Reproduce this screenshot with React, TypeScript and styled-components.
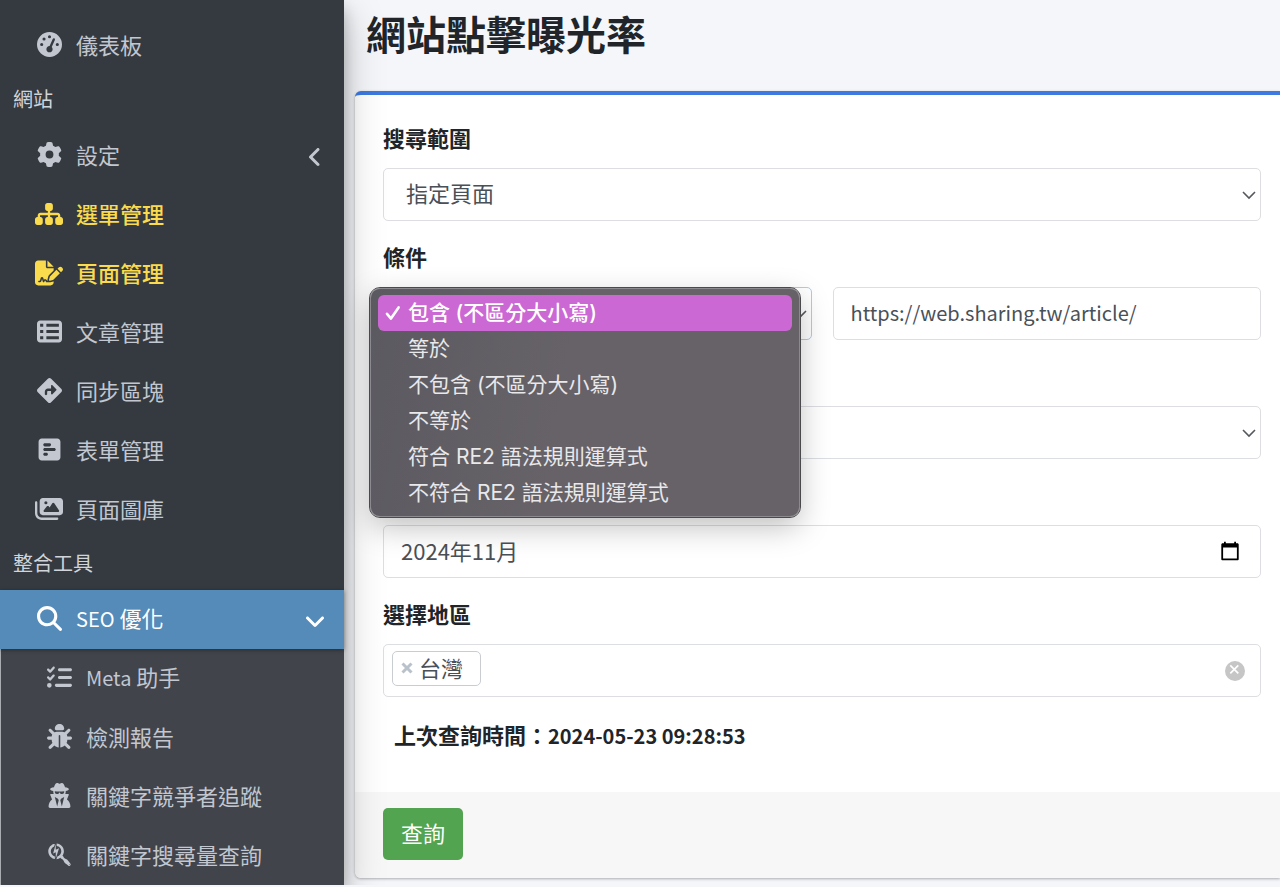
import React from 'react';
import styled, { createGlobalStyle, css } from 'styled-components';
import {
  FaAngleDown,
  FaAngleLeft,
  FaBug,
  FaDiamondTurnRight,
  FaFileSignature,
  FaGaugeHigh,
  FaGear,
  FaImages,
  FaListCheck,
  FaMagnifyingGlass,
  FaSearchengin,
  FaSitemap,
  FaSquarePollHorizontal,
  FaTableList,
  FaUserSecret,
} from 'react-icons/fa6';

const GlobalStyle = createGlobalStyle`
  *, *::before, *::after { box-sizing: border-box; }
  body {
    margin: 0;
    background: #f4f6f9;
    color: #212529;
    font-family: "Noto Sans CJK TC", sans-serif;
    font-size: 22px;
    line-height: 32px;
    overflow-x: hidden;
  }
  button, input, select { font: inherit; color: inherit; }
`;

const Page = styled.div`
  display: flex;
  align-items: flex-start;
`;

/* Latin letters and digits run one step smaller than the Chinese text beside them. */
const Latin = styled.span`
  font-size: 20px;
`;

/* ---------- sidebar ---------- */

const Sidebar = styled.nav`
  position: relative;
  z-index: 1;
  flex: 0 0 344px;
  padding-top: 16px;
  background: #343a40;
  box-shadow: 0 14px 38px rgba(0, 0, 0, 0.25), 0 10px 14px rgba(0, 0, 0, 0.22);
`;

const NavList = styled.ul`
  margin: 0;
  padding: 0;
  list-style: none;
`;

const SubList = styled(NavList)`
  background: #41444b;
  border-left: 1px solid #a9acb0;
`;

const NavHeader = styled.h2`
  display: flex;
  align-items: center;
  height: 51px;
  margin: 0;
  padding: 0 13px 4px;
  color: #d0d4db;
  font-size: 20px;
  font-weight: 400;
`;

type Tone = 'normal' | 'marked' | 'active';

const tones = {
  normal: css`
    color: #c2c7d0;
  `,
  marked: css`
    color: #f9db4d;
    font-weight: 500;
  `,
  active: css`
    color: #fff;
    background: #548bb9;
    box-shadow: 0 1px 4px rgba(0, 0, 0, 0.4);
  `,
};

const NavLink = styled.a<{ $tone: Tone; $nested?: boolean }>`
  position: relative;
  display: flex;
  align-items: center;
  height: 59px;
  padding: 0 19px 2px ${(p) => (p.$nested ? 43 : 34)}px;
  text-decoration: none;
  ${(p) => tones[p.$tone]}
`;

const NavIcon = styled.span<{ $wide?: boolean }>`
  display: flex;
  justify-content: center;
  width: 30px;
  margin-right: 12px;

  svg {
    width: ${(p) => (p.$wide ? 28 : 25)}px;
    height: ${(p) => (p.$wide ? 28 : 25)}px;
  }
`;

const NavText = styled.span`
  padding-bottom: 1px;
`;

const NavArrow = styled.span`
  display: flex;
  justify-content: center;
  width: 20px;
  margin-left: auto;
  padding-top: 4px;

  svg {
    width: 24px;
    height: 24px;
    flex: none;
  }
`;

/* ---------- content ---------- */

const Main = styled.main`
  flex: 1;
  min-width: 0;
  padding-left: 11px;
`;

const Title = styled.h1`
  margin: 0;
  padding: 4px 11px 29px;
  font-size: 40px;
  line-height: 58px;
  font-weight: 700;
`;

const Card = styled.form`
  border-top: 4px solid #3d79e0;
  border-radius: 6px 0 0 6px;
  background: #fff;
  box-shadow: 0 1px 3px rgba(0, 0, 0, 0.3);
`;

const CardBody = styled.div`
  display: flex;
  flex-direction: column;
  gap: 19px;
  padding: 26px 19px 40px 28px;
`;

const CardFooter = styled.div`
  padding: 16px 28px 18px;
  border-radius: 0 0 0 6px;
  background: #f7f7f7;
`;

/* A bare field keeps the room of the caption that the open menu covers. */
const Field = styled.div<{ $bare?: boolean }>`
  display: flex;
  flex-direction: column;
  gap: 15px;
  padding-top: ${(p) => (p.$bare ? 47 : 0)}px;
`;

const Label = styled.label`
  font-weight: 700;
`;

const Pair = styled.div`
  display: grid;
  grid-template-columns: 1fr 1fr;
  gap: 21px;
`;

const Stack = styled.div`
  position: relative;
  display: grid;
  align-items: center;

  > * {
    grid-area: 1 / 1;
  }

  > svg {
    justify-self: end;
    margin-right: 5px;
    pointer-events: none;
  }
`;

const controlBox = css`
  width: 100%;
  min-width: 0;
  height: 53px;
  border: 1px solid #dcdee1;
  border-radius: 5px;
  background: #fff;
  color: #495057;
`;

const TextInput = styled.input`
  ${controlBox}
  padding: 0 17px 4px;
  outline: none;
`;

const UrlInput = styled(TextInput)`
  padding-bottom: 2px;
  font-size: 20px;
`;

const Select = styled.select<{ $focused?: boolean }>`
  ${controlBox}
  padding: 0 40px 5px 22px;
  border-color: ${(p) => (p.$focused ? '#a6cdf8' : '#dcdee1')};
  appearance: none;
  outline: none;
`;

const CalendarButton = styled.button`
  display: flex;
  justify-self: end;
  margin: 0 22px 2px 0;
  padding: 0;
  border: 0;
  background: none;
`;

const Popup = styled.ul`
  position: absolute;
  z-index: 2;
  top: 1px;
  left: -13px;
  width: calc(100% + 1px);
  margin: 0;
  padding: 6px 7px 5px;
  border: 1px solid #8c8a8f;
  border-radius: 10px;
  outline: 1px solid #4a4a4d;
  background: linear-gradient(100deg, #5b5a60 0%, #666268 45%, #666268 100%);
  box-shadow: 0 10px 30px rgba(0, 0, 0, 0.25);
  list-style: none;
`;

const PopupOption = styled.li<{ $selected?: boolean }>`
  display: flex;
  align-items: center;
  height: 36px;
  border-radius: 6px;
  color: ${(p) => (p.$selected ? '#fff' : '#e9e8ea')};
  background: ${(p) => (p.$selected ? '#cb68d4' : 'transparent')};
  font-family: Inter, "Noto Sans CJK TC", sans-serif;
  font-size: 21px;
  font-weight: ${(p) => (p.$selected ? 500 : 400)};
`;

const CheckSlot = styled.span`
  display: flex;
  justify-content: center;
  width: 30px;
`;

const TagBox = styled.div`
  ${controlBox}
  display: flex;
  align-items: center;
  padding: 0 15px 0 8px;
`;

const Tag = styled.span`
  display: flex;
  align-items: center;
  gap: 6px;
  height: 35px;
  margin-bottom: 4px;
  padding: 0 17px 4px 8px;
  border: 1px solid #c9cdd2;
  border-radius: 5px;
`;

const IconButton = styled.button`
  display: flex;
  padding: 0;
  border: 0;
  background: none;
`;

const RemoveButton = styled(IconButton)`
  padding-top: 3px;
`;

const TagInput = styled.input`
  flex: 1;
  min-width: 0;
  border: 0;
  outline: none;
  background: none;
`;

const LastQuery = styled.p`
  margin: 0;
  padding: 2px 0 0 11px;
  font-weight: 700;
`;

const SubmitButton = styled.button`
  display: block;
  height: 52px;
  padding: 0 18px 4px;
  border: 0;
  border-radius: 5px;
  background: #53a451;
  color: #fff;
`;

/* ---------- small drawings ---------- */

const Chevron = () => (
  <svg width="14" height="10" viewBox="0 0 14 10" fill="none" stroke="#55595e" strokeWidth="1.6">
    <path d="M1 2l6 6 6-6" />
  </svg>
);

const Calendar = () => (
  <svg width="18" height="20" viewBox="0 0 18 20" fill="none">
    <path d="M1.2 3.5h15.6v14.8H1.2z" stroke="#000" strokeWidth="1.8" strokeLinejoin="round" />
    <path d="M1 2.5h16v4H1zM3 0.8h1.8V3H3zM13.2 0.8H15V3h-1.8z" fill="#000" />
  </svg>
);

const Check = () => (
  <svg width="16" height="16" viewBox="0 0 16 16" fill="none" stroke="#fff" strokeWidth="2.6">
    <path d="M2 8.8l4 4.8L13.6 2.4" strokeLinecap="round" strokeLinejoin="round" />
  </svg>
);

const Cross = () => (
  <svg width="12" height="12" viewBox="0 0 12 12" stroke="#b9c2cb" strokeWidth="3">
    <path d="M1.5 1.5l9 9M10.5 1.5l-9 9" />
  </svg>
);

const ClearMark = () => (
  <svg width="20" height="20" viewBox="0 0 20 20" stroke="#fff" strokeWidth="1.7">
    <circle cx="10" cy="10" r="10" fill="#c6c6c6" stroke="none" />
    <path d="M5.3 4.3l8 8M13.3 4.3l-8 8" />
  </svg>
);

/* ---------- data ---------- */

interface Item {
  latin?: string;
  text: string;
  icon: React.ReactNode;
  wide?: boolean;
  tone?: Tone;
  arrow?: React.ReactNode;
}

const siteItems: Item[] = [
  { text: '設定', icon: <FaGear />, arrow: <FaAngleLeft /> },
  { text: '選單管理', icon: <FaSitemap />, wide: true, tone: 'marked' },
  { text: '頁面管理', icon: <FaFileSignature />, wide: true, tone: 'marked' },
  { text: '文章管理', icon: <FaTableList /> },
  { text: '同步區塊', icon: <FaDiamondTurnRight /> },
  { text: '表單管理', icon: <FaSquarePollHorizontal /> },
  { text: '頁面圖庫', icon: <FaImages />, wide: true },
];

const seoItems: Item[] = [
  { latin: 'Meta', text: ' 助手', icon: <FaListCheck /> },
  { text: '檢測報告', icon: <FaBug /> },
  { text: '關鍵字競爭者追蹤', icon: <FaUserSecret /> },
  { text: '關鍵字搜尋量查詢', icon: <FaSearchengin /> },
];

const conditions = [
  '包含 (不區分大小寫)',
  '等於',
  '不包含 (不區分大小寫)',
  '不等於',
  '符合 RE2 語法規則運算式',
  '不符合 RE2 語法規則運算式',
];

function NavItem({ item, nested, children }: { item: Item; nested?: boolean; children?: React.ReactNode }) {
  return (
    <li>
      <NavLink href="#" $tone={item.tone ?? 'normal'} $nested={nested}>
        <NavIcon $wide={item.wide}>{item.icon}</NavIcon>
        <NavText>
          {item.latin && <Latin>{item.latin}</Latin>}
          {item.text}
        </NavText>
        {item.arrow && <NavArrow>{item.arrow}</NavArrow>}
      </NavLink>
      {children}
    </li>
  );
}

export default function App() {
  return (
    <>
      <GlobalStyle />
      <Page>
        <Sidebar>
          <NavList>
            <NavItem item={{ text: '儀表板', icon: <FaGaugeHigh /> }} />
          </NavList>
          <NavHeader>網站</NavHeader>
          <NavList>
            {siteItems.map((item) => (
              <NavItem key={item.text} item={item} />
            ))}
          </NavList>
          <NavHeader>整合工具</NavHeader>
          <NavList>
            <NavItem
              item={{
                latin: 'SEO',
                text: ' 優化',
                icon: <FaMagnifyingGlass />,
                tone: 'active',
                arrow: <FaAngleDown />,
              }}
            >
              <SubList>
                {seoItems.map((item) => (
                  <NavItem key={item.text} item={item} nested />
                ))}
              </SubList>
            </NavItem>
          </NavList>
        </Sidebar>

        <Main>
          <Title>網站點擊曝光率</Title>
          <Card onSubmit={(e) => e.preventDefault()}>
            <CardBody>
              <Field>
                <Label htmlFor="scope">搜尋範圍</Label>
                <Stack>
                  <Select id="scope" defaultValue="指定頁面">
                    <option>指定頁面</option>
                  </Select>
                  <Chevron />
                </Stack>
              </Field>

              <Field>
                <Label htmlFor="condition">條件</Label>
                <Pair>
                  <Stack>
                    <Select id="condition" $focused defaultValue="">
                      <option value="" aria-label={conditions[0]} />
                    </Select>
                    <Chevron />
                    <Popup role="listbox" aria-label="條件">
                      {conditions.map((c, i) => (
                        <PopupOption key={c} role="option" aria-selected={i === 0} $selected={i === 0}>
                          <CheckSlot>{i === 0 && <Check />}</CheckSlot>
                          {c}
                        </PopupOption>
                      ))}
                    </Popup>
                  </Stack>
                  <UrlInput aria-label="網址" defaultValue="https://web.sharing.tw/article/" />
                </Pair>
              </Field>

              <Field $bare>
                <Stack>
                  <Select aria-label="裝置" />
                  <Chevron />
                </Stack>
              </Field>

              <Field $bare>
                <Stack>
                  <TextInput aria-label="月份" defaultValue="2024年11月" />
                  <CalendarButton type="button" aria-label="選擇月份">
                    <Calendar />
                  </CalendarButton>
                </Stack>
              </Field>

              <Field>
                <Label htmlFor="region">選擇地區</Label>
                <TagBox>
                  <Tag>
                    <RemoveButton type="button" aria-label="移除台灣">
                      <Cross />
                    </RemoveButton>
                    台灣
                  </Tag>
                  <TagInput id="region" />
                  <IconButton type="button" aria-label="清除">
                    <ClearMark />
                  </IconButton>
                </TagBox>
              </Field>

              <LastQuery>
                上次查詢時間：<Latin>2024-05-23 09:28:53</Latin>
              </LastQuery>
            </CardBody>
            <CardFooter>
              <SubmitButton type="submit">查詢</SubmitButton>
            </CardFooter>
          </Card>
        </Main>
      </Page>
    </>
  );
}
